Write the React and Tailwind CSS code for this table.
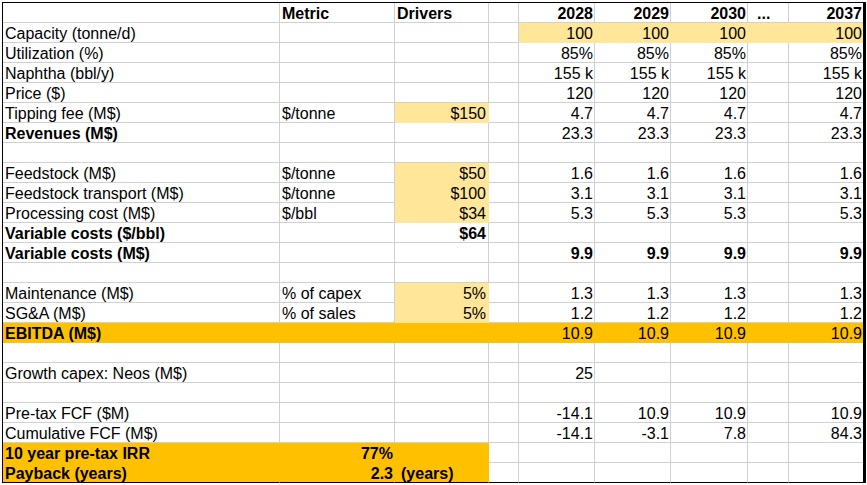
import React from "react";

const W = [
  "w-[277px]",
  "w-[115px]",
  "w-[94px]",
  "w-[30px]",
  "w-[76px]",
  "w-[76px]",
  "w-[77px]",
  "w-[41px]",
  "w-[74px]",
];

const n = (t) => ({ t, right: true });
const nb = (t) => ({ t, right: true, bold: true });
const y = (t) => ({ t, right: true, fill: "y" });
const b = (t) => ({ t, bold: true });

const rows = [
  { cells: ["", b("Metric"), b("Drivers"), "", nb("2028"), nb("2029"), nb("2030"), { t: "...", bold: true, pad: "pl-[9px]" }, nb("2037")] },
  { cells: ["Capacity (tonne/d)", "", "", "", y("100"), y("100"), y("100"), { t: "", fill: "y" }, y("100")] },
  { cells: ["Utilization (%)", "", "", "", n("85%"), n("85%"), n("85%"), "", n("85%")] },
  { cells: ["Naphtha (bbl/y)", "", "", "", n("155 k"), n("155 k"), n("155 k"), "", n("155 k")] },
  { cells: ["Price ($)", "", "", "", n("120"), n("120"), n("120"), "", n("120")] },
  { cells: ["Tipping fee (M$)", "$/tonne", y("$150"), "", n("4.7"), n("4.7"), n("4.7"), "", n("4.7")] },
  { cells: [b("Revenues (M$)"), "", "", "", n("23.3"), n("23.3"), n("23.3"), "", n("23.3")] },
  { cells: ["", "", "", "", "", "", "", "", ""] },
  { cells: ["Feedstock (M$)", "$/tonne", y("$50"), "", n("1.6"), n("1.6"), n("1.6"), "", n("1.6")] },
  { cells: ["Feedstock transport (M$)", "$/tonne", y("$100"), "", n("3.1"), n("3.1"), n("3.1"), "", n("3.1")] },
  { cells: ["Processing cost (M$)", "$/bbl", y("$34"), "", n("5.3"), n("5.3"), n("5.3"), "", n("5.3")] },
  { cells: [b("Variable costs ($/bbl)"), "", nb("$64"), "", "", "", "", "", ""] },
  { cells: [b("Variable costs (M$)"), "", "", "", nb("9.9"), nb("9.9"), nb("9.9"), "", nb("9.9")] },
  { cells: ["", "", "", "", "", "", "", "", ""] },
  { cells: ["Maintenance (M$)", "% of capex", y("5%"), "", n("1.3"), n("1.3"), n("1.3"), "", n("1.3")] },
  { cells: ["SG&A (M$)", "% of sales", y("5%"), "", n("1.2"), n("1.2"), n("1.2"), "", n("1.2")] },
  { fill: "o", cells: [b("EBITDA (M$)"), "", "", "", n("10.9"), n("10.9"), n("10.9"), "", n("10.9")] },
  { cells: ["", "", "", "", "", "", "", "", ""] },
  { cells: ["Growth capex: Neos (M$)", "", "", "", n("25"), "", "", "", ""] },
  { cells: ["", "", "", "", "", "", "", "", ""] },
  { cells: ["Pre-tax FCF ($M)", "", "", "", n("-14.1"), n("10.9"), n("10.9"), "", n("10.9")] },
  { cells: ["Cumulative FCF (M$)", "", "", "", n("-14.1"), n("-3.1"), n("7.8"), "", n("84.3")] },
  {
    cells: [
      { t: "10 year pre-tax IRR", bold: true, fill: "o" },
      { t: "77%", bold: true, right: true, fill: "o" },
      { t: "", fill: "o" },
      "", "", "", "", "", "",
    ],
  },
  {
    last: true,
    cells: [
      { t: "Payback (years)", bold: true, fill: "o" },
      { t: "2.3", bold: true, right: true, fill: "o" },
      { t: "(years)", bold: true, fill: "o", pad: "pl-[6px]" },
      "", "", "", "", "", "",
    ],
  },
];

function Cell({ i, c, rowFill, last }) {
  const cell = typeof c === "string" ? { t: c } : c;
  const fill = cell.fill || rowFill;
  const fillCls =
    fill === "y"
      ? "bg-[#ffe699] border-[#ffe699]"
      : fill === "o"
      ? "bg-[#ffc000] border-[#ffc000]"
      : "border-[#d0d0d0]";
  const pad = cell.pad
    ? cell.pad
    : cell.right
    ? i === 2
      ? "pr-[2px] text-right"
      : "pr-[1px] text-right"
    : "pl-[2px]";
  return (
    <div
      className={[
        W[i],
        "h-[20px] shrink-0 whitespace-nowrap leading-[22px] border-b",
        i < 8 ? "border-r" : "",
        fillCls,
        last ? "border-b-black" : "",
        pad,
        cell.bold ? "font-bold" : "",
      ].join(" ")}
    >
      {cell.t}
    </div>
  );
}

export default function App() {
  return (
    <div className="w-[867px] h-[485px] bg-white pt-[2px] pl-[2px] overflow-hidden">
      <div className="w-[864px] flex flex-col border-t border-l border-r-[3px] border-black text-[16px] text-black font-['Liberation_Sans',Arial,sans-serif]">
        {rows.map((r, ri) => (
          <div key={ri} className="flex">
            {r.cells.map((c, i) => (
              <Cell key={i} i={i} c={c} rowFill={r.fill} last={r.last} />
            ))}
          </div>
        ))}
      </div>
    </div>
  );
}
